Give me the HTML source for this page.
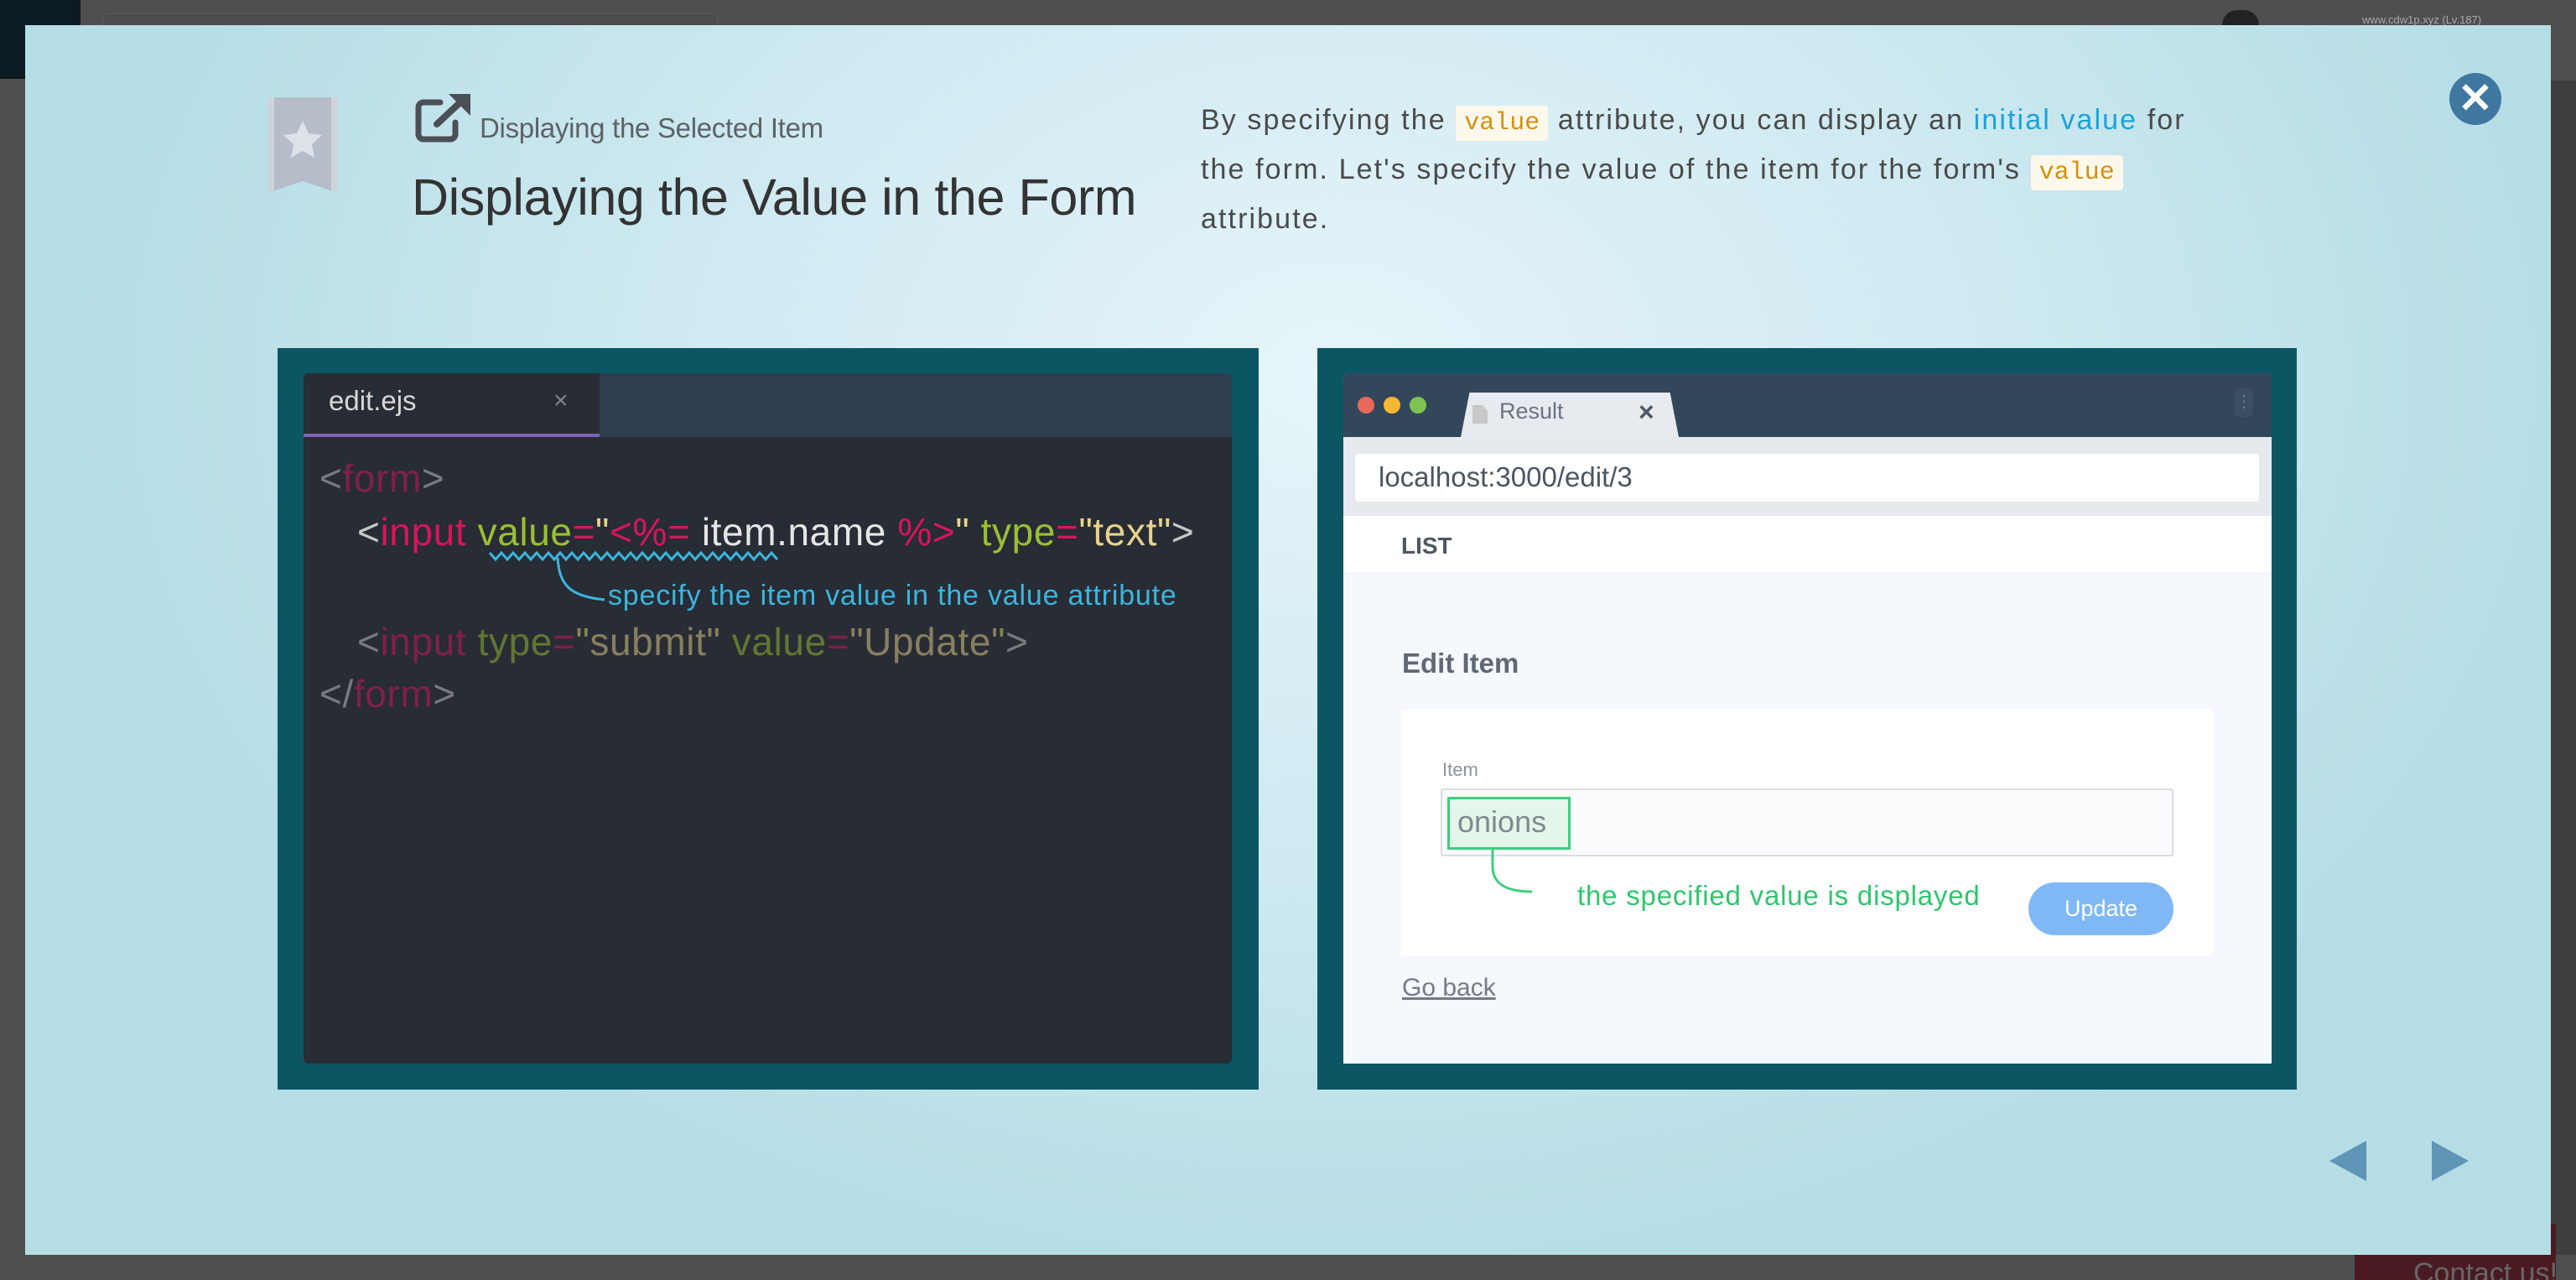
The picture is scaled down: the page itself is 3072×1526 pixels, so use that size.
<!DOCTYPE html>
<html><head><meta charset="utf-8"><style>
*{margin:0;padding:0;box-sizing:border-box}
body{width:3072px;height:1526px;background:#4f4f4f;position:relative;overflow:hidden;font-family:"Liberation Sans",sans-serif}
.abs{position:absolute}
#modal{left:30px;top:30px;width:3012px;height:1466px;background:radial-gradient(ellipse 1500px 1100px at 1560px 420px,#e6f5fa 0%,#d2ebf2 45%,#b5dde6 100%);overflow:hidden}
.code{font-family:"Liberation Sans",sans-serif;font-size:46px;letter-spacing:0.6px;white-space:pre;line-height:1}
.tag{color:#d8155a}.br{color:#c8c8c8}.at{color:#9ac033}.st{color:#e8d28c}.wh{color:#e6e6e6}
.dim{opacity:.5}
.kw{background:#fdf8ec;color:#d4900f;font-family:"Liberation Mono",monospace;font-size:30px;letter-spacing:0;padding:4px 10px;border-radius:4px}
</style></head><body>
<div class="abs" style="left:0;top:0;width:96px;height:94px;background:#0c1a22"></div>
<div class="abs" style="left:122px;top:16px;width:734px;height:30px;border:1px solid #5c5c5c;border-radius:6px;background:#4c4c4c"></div>
<div class="abs" style="left:2650px;top:12px;width:44px;height:18px;border-radius:22px 22px 0 0;background:#222"></div>
<div class="abs" style="left:2817px;top:16px;color:#aaa;font-size:13px">www.cdw1p.xyz (Lv.187)</div>
<div class="abs" style="left:3042px;top:96px;width:30px;height:1400px;background:#3e3e3e"></div>
<div class="abs" style="left:2808px;top:1459px;width:240px;height:67px;background:#4a1a22;color:#666;font-size:34px;padding:40px 0 0 70px;white-space:nowrap;overflow:hidden">Contact us!</div>

<div id="modal" class="abs">
 <svg class="abs" style="left:289px;top:86px" width="84" height="114" viewBox="0 0 84 114">
  <path d="M0 0H84V114L42 100L0 114Z" fill="#b6bdc8"/>
  <path d="M0 0H8V112L0 114Z M76 0H84V114L76 112Z" fill="#cfd3da"/>
  <path d="M42 28l7 15 16 2-12 11 3 16-14-8-14 8 3-16-12-11 16-2z" fill="#dde1e8"/>
 </svg>
 <svg class="abs" style="left:465px;top:82px" width="66" height="58" viewBox="0 0 66 58">
  <path d="M30 10H10a6 6 0 0 0-6 6v32a6 6 0 0 0 6 6h32a6 6 0 0 0 6-6V34" fill="none" stroke="#4a5055" stroke-width="7" stroke-linecap="round"/>
  <path d="M26 36L56 8" stroke="#4a5055" stroke-width="8" stroke-linecap="round"/>
  <path d="M40 0H66V26Z" fill="#4a5055"/>
 </svg>
 <div class="abs" style="left:542px;top:104px;font-size:33px;color:#5e6266;letter-spacing:-0.3px">Displaying the Selected Item</div>
 <div class="abs" style="left:461px;top:170px;font-size:61px;color:#333;letter-spacing:-0.4px;font-weight:300">Displaying the Value in the Form</div>
 <div class="abs" style="left:1402px;top:86px;width:1205px;font-size:34px;line-height:55px;color:#4a4a4a;letter-spacing:2.1px">By specifying the <span class="kw">value</span> attribute, you can display an <span style="color:#1aa3d8">initial value</span> for the form. Let's specify the value of the item for the form's <span class="kw">value</span> attribute.</div>
 <div class="abs" style="left:2891px;top:57px;width:62px;height:62px;border-radius:50%;background:#3f77a0;color:#fff;font-size:50px;font-weight:bold;text-align:center;line-height:60px">✕</div>

 <div class="abs" style="left:301px;top:385px;width:1170px;height:884px;background:#0c5664">
  <div class="abs" style="left:31px;top:30px;width:1107px;height:823px;background:#282c34;border-radius:6px;overflow:hidden">
   <div class="abs" style="left:0;top:0;width:1107px;height:76px;background:#2c3e50"></div>
   <div class="abs" style="left:0;top:0;width:353px;height:76px;background:#282c34;border-bottom:4px solid #7e62b8"></div>
   <div class="abs" style="left:30px;top:14px;font-size:33px;color:#d8d8d8">edit.ejs</div>
   <div class="abs" style="left:298px;top:16px;font-size:30px;color:#7d8590">×</div>
  </div>
  <div class="abs code dim" style="left:50px;top:132px"><span class="br">&lt;</span><span class="tag">form</span><span class="br">&gt;</span></div>
  <div class="abs code" style="left:95px;top:196px"><span class="br">&lt;</span><span class="tag">input</span> <span class="at">value</span><span class="tag">=</span><span class="st">"</span><span class="tag">&lt;%=</span> <span class="wh">item.name</span> <span class="tag">%&gt;</span><span class="st">"</span> <span class="at">type</span><span class="tag">=</span><span class="st">"text"</span><span class="br">&gt;</span></div>
  <svg class="abs" style="left:250px;top:238px" width="360" height="70" viewBox="0 0 360 70">
   <path d="M3 6 l7 8 7 -8 7 8 7 -8 7 8 7 -8 7 8 7 -8 7 8 7 -8 7 8 7 -8 7 8 7 -8 7 8 7 -8 7 8 7 -8 7 8 7 -8 7 8 7 -8 7 8 7 -8 7 8 7 -8 7 8 7 -8 7 8 7 -8 7 8 7 -8 7 8 7 -8 7 8 7 -8 7 8 7 -8 7 8 7 -8 7 8 7 -8 7 8 7 -8 7 8 7 -8 7 8 7 -8 7 8" fill="none" stroke="#3bb6e0" stroke-width="3"/>
   <path d="M84 12 C86 44 98 58 140 62" fill="none" stroke="#3bb6e0" stroke-width="3"/>
  </svg>
  <div class="abs" style="left:394px;top:276px;font-size:34px;color:#3bb6e0;white-space:pre;letter-spacing:0.8px">specify the item value in the value attribute</div>
  <div class="abs code dim" style="left:95px;top:327px"><span class="br">&lt;</span><span class="tag">input</span> <span class="at">type</span><span class="tag">=</span><span class="st">"submit"</span> <span class="at">value</span><span class="tag">=</span><span class="st">"Update"</span><span class="br">&gt;</span></div>
  <div class="abs code dim" style="left:50px;top:389px"><span class="br">&lt;/</span><span class="tag">form</span><span class="br">&gt;</span></div>
 </div>

 <div class="abs" style="left:1541px;top:385px;width:1168px;height:884px;background:#0c5664">
  <div class="abs" style="left:31px;top:30px;width:1107px;height:823px;background:#f5f8fc;border-radius:6px 6px 0 0;overflow:hidden">
   <div class="abs" style="left:0;top:0;width:1107px;height:76px;background:#33475b"></div>
   <div class="abs" style="left:17px;top:28px;width:20px;height:20px;border-radius:50%;background:#e8685a"></div>
   <div class="abs" style="left:48px;top:28px;width:20px;height:20px;border-radius:50%;background:#f7b733"></div>
   <div class="abs" style="left:79px;top:28px;width:20px;height:20px;border-radius:50%;background:#7ec34f"></div>
   <div class="abs" style="left:1063px;top:18px;width:22px;height:34px;background:#3a4f63;border-radius:3px;color:#6c7f92;font-size:20px;text-align:center;line-height:32px">⋮</div>
   <div class="abs" style="left:140px;top:23px;width:260px;height:53px;background:#e7eaee;clip-path:polygon(4% 0,96% 0,100% 100%,0 100%);border-radius:4px 4px 0 0"></div>
   <div class="abs" style="left:154px;top:38px;width:18px;height:22px;background:#c8c8c8;clip-path:polygon(0 0,65% 0,100% 30%,100% 100%,0 100%)"></div>
   <div class="abs" style="left:186px;top:30px;font-size:27px;color:#6a7480">Result</div>
   <div class="abs" style="left:352px;top:28px;font-size:32px;font-weight:bold;color:#4e5866">×</div>
   <div class="abs" style="left:0;top:76px;width:1107px;height:94px;background:#e6e9ee"></div>
   <div class="abs" style="left:14px;top:96px;width:1078px;height:57px;background:#fff;border-radius:4px;font-size:33px;color:#4a5562;padding:9px 0 0 28px">localhost:3000/edit/3</div>
   <div class="abs" style="left:0;top:170px;width:1107px;height:67px;background:#fff"></div>
   <div class="abs" style="left:69px;top:190px;font-size:28px;font-weight:bold;color:#4e5662">LIST</div>
   <div class="abs" style="left:70px;top:327px;font-size:33px;font-weight:bold;color:#606873">Edit Item</div>
   <div class="abs" style="left:69px;top:401px;width:968px;height:294px;background:#fff"></div>
   <div class="abs" style="left:118px;top:460px;font-size:22px;color:#8a939c">Item</div>
   <div class="abs" style="left:116px;top:495px;width:874px;height:81px;background:#fafbfc;border:2px solid #d8dde3;border-radius:3px"></div>
   <div class="abs" style="left:124px;top:505px;width:147px;height:63px;background:#e4f5ea;border:3px solid #3ccf7c;font-size:36px;color:#7d8a90;padding:6px 0 0 9px">onions</div>
   <svg class="abs" style="left:175px;top:568px" width="100" height="60"><path d="M3 0 V20 C3 40 18 50 50 50" fill="none" stroke="#3ccf7c" stroke-width="3"/></svg>
   <div class="abs" style="left:279px;top:604px;font-size:33px;color:#2ec66e;white-space:pre;letter-spacing:0.8px">the specified value is displayed</div>
   <div class="abs" style="left:817px;top:607px;width:173px;height:63px;border-radius:32px;background:#7fb8f5;color:#fff;font-size:27px;text-align:center;line-height:63px">Update</div>
   <div class="abs" style="left:70px;top:716px;font-size:30px;color:#737b84;text-decoration:underline">Go back</div>
  </div>
 </div>

 <svg class="abs" style="left:2748px;top:1330px" width="44" height="48"><path d="M44 0V48L0 24Z" fill="#5f95b5"/></svg>
 <svg class="abs" style="left:2870px;top:1330px" width="44" height="48"><path d="M0 0V48L44 24Z" fill="#5f95b5"/></svg>
</div>
</body></html>
